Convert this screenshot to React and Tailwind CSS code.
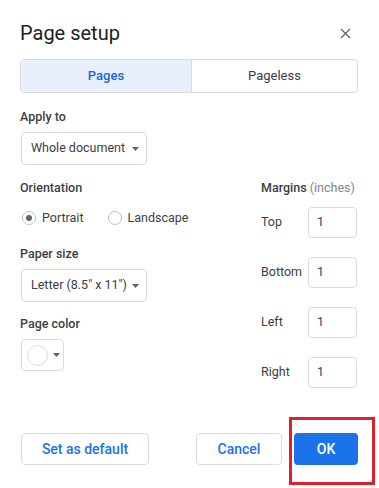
import React from "react";

const Caret = () => (
  <svg width="7" height="4" viewBox="0 0 7 4" className="shrink-0">
    <path d="M0 0h7L3.5 4z" fill="#5f6368" />
  </svg>
);

const Dropdown = ({ label }) => (
  <div className="ml-px flex h-[33px] w-[126px] items-center justify-between whitespace-nowrap rounded border border-[#dadce0] pl-[9px] pr-[7px] text-[12.5px] text-[#3c4043]">
    <span>{label}</span>
    <Caret />
  </div>
);

const Radio = ({ checked, label }) => (
  <div className="flex items-center gap-[6px]">
    <span className="flex h-[14px] w-[14px] items-center justify-center rounded-full border border-[#bdc1c6]">
      {checked && <span className="h-[6px] w-[6px] rounded-full bg-[#5f6368]" />}
    </span>
    <span className="text-[12.5px] text-[#3c4043]">{label}</span>
  </div>
);

const MarginRow = ({ label }) => (
  <div className="flex items-center">
    <span className="w-[47px] text-[12.5px] text-[#3c4043]">{label}</span>
    <div className="flex h-[31px] w-[49px] items-center rounded border border-[#dadce0] pl-[8px] text-[12.5px] text-[#3c4043]">
      1
    </div>
  </div>
);

export default function App() {
  return (
    <div
      className="relative h-[488px] w-[379px] overflow-hidden bg-white"
      style={{ fontFamily: "Roboto, 'Liberation Sans', sans-serif" }}
    >
      <div className="pl-[20px] pr-[21px] pt-[19px]">
        {/* header */}
        <div className="flex h-[28px] items-center justify-between">
          <h2 className="text-[20px] leading-[28px] text-[#202124]">Page setup</h2>
          <div className="mr-[1px] flex h-[24px] w-[24px] items-center justify-center">
            <svg width="11" height="11" viewBox="0 0 11 11">
              <path d="M1 1l9 9M10 1l-9 9" stroke="#5f6368" strokeWidth="1.3" />
            </svg>
          </div>
        </div>

        {/* tabs */}
        <div className="mt-[12px] flex h-[34px] overflow-hidden rounded border border-[#dadce0] text-[13px]">
          <div className="flex w-[170px] items-center justify-center bg-[#e8f0fe] font-medium text-[#1967d2]">Pages</div>
          <div className="flex flex-1 items-center justify-center border-l border-[#dadce0] text-[#3c4043]">Pageless</div>
        </div>

        <div className="mt-[16px] text-[12.5px] font-medium leading-[16px] text-[#3c4043]">Apply to</div>
        <div className="mt-[7px]">
          <Dropdown label="Whole document" />
        </div>

        {/* two columns */}
        <div className="mt-[15px] flex">
          <div className="w-[241px]">
            <div className="text-[12.5px] font-medium leading-[16px] text-[#3c4043]">Orientation</div>
            <div className="ml-[2px] mt-[12px] flex h-[20px] items-center gap-[24px]">
              <Radio checked label="Portrait" />
              <Radio label="Landscape" />
            </div>
            <div className="mt-[18px] text-[12.5px] font-medium leading-[16px] text-[#3c4043]">Paper size</div>
            <div className="mt-[7px]">
              <Dropdown label={'Letter (8.5" x 11")'} />
            </div>
            <div className="mt-[14px] text-[12.5px] font-medium leading-[16px] text-[#3c4043]">Page color</div>
            <div className="ml-px mt-[7px] flex h-[32px] w-[43px] items-center gap-[5px] rounded border border-[#dadce0] pl-[5px]">
              <span className="h-[21px] w-[21px] rounded-full border border-[#dadce0] bg-white" />
              <Caret />
            </div>
          </div>

          <div className="flex-1">
            <div className="whitespace-nowrap text-[12.5px] leading-[16px] text-[#80868b]">
              <span className="font-medium text-[#3c4043]">Margins</span> (inches)
            </div>
            <div className="mt-[11px] flex flex-col gap-[19px]">
              <MarginRow label="Top" />
              <MarginRow label="Bottom" />
              <MarginRow label="Left" />
              <MarginRow label="Right" />
            </div>
          </div>
        </div>

        {/* footer buttons */}
        <div className="mt-[45px] flex items-center justify-between text-[14px] font-medium">
          <button className="ml-px flex h-[32px] w-[128px] items-center justify-center rounded border border-[#dadce0] text-[#1a73e8]">
            Set as default
          </button>
          <div className="flex gap-[12px]">
            <button className="flex h-[32px] w-[86px] items-center justify-center rounded border border-[#dadce0] text-[#1a73e8]">
              Cancel
            </button>
            <button className="flex h-[32px] w-[64px] items-center justify-center rounded bg-[#1a73e8] text-white">
              OK
            </button>
          </div>
        </div>
      </div>

      {/* annotation highlight */}
      <div className="absolute left-[289px] top-[417px] h-[68px] w-[86px] border-[3px] border-[#e3202a]" />
    </div>
  );
}
